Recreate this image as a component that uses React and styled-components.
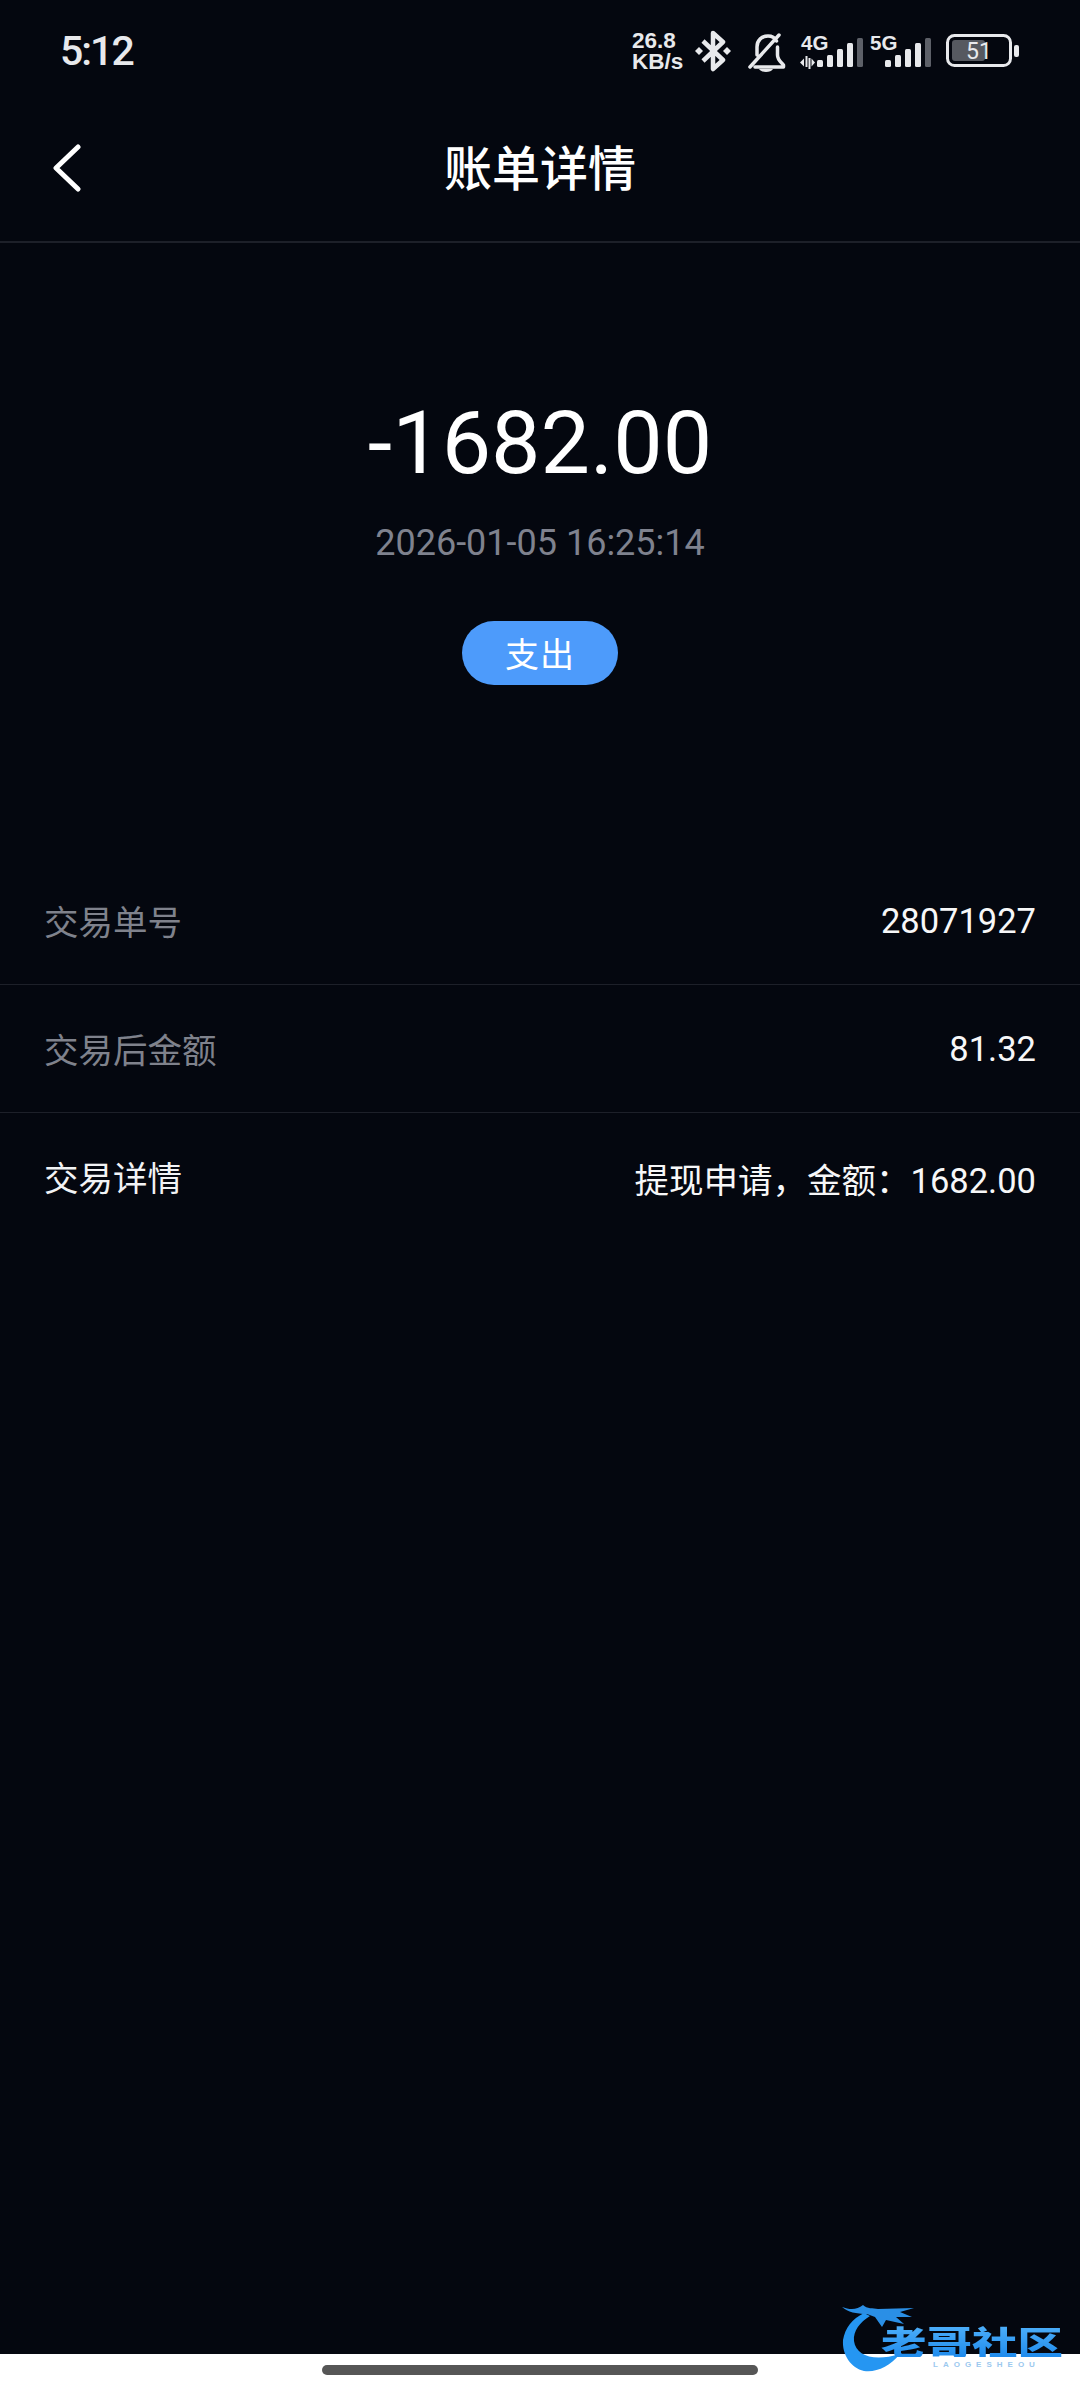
import React from "react";
import styled, { createGlobalStyle } from "styled-components";

const GlobalStyle = createGlobalStyle`
  html, body {
    margin: 0;
    padding: 0;
    background: #04070f;
  }
  * {
    box-sizing: border-box;
  }
`;

const FONT = `Roboto, "Noto Sans CJK SC", sans-serif`;

const Page = styled.div`
  position: relative;
  width: 1080px;
  height: 2400px;
  display: flex;
  flex-direction: column;
  overflow: hidden;
  background: #04070f;
  color: #fff;
  font-family: ${FONT};
`;

const StatusBar = styled.div`
  height: 90px;
  flex-shrink: 0;
  display: flex;
  align-items: center;
  justify-content: space-between;
  padding: 12px 60px 0 60px;
`;

const Time = styled.span`
  font-size: 41px;
  font-weight: 500;
  letter-spacing: -2px;
  color: #e8e9ec;
`;

const StatusIcons = styled.div`
  display: flex;
  align-items: center;
`;

const Speed = styled.div`
  width: 58px;
  margin-right: 5px;
  font-family: "Liberation Sans", sans-serif;
  font-size: 22.5px;
  font-weight: 700;
  line-height: 21px;
  color: #e8e9ec;
  white-space: nowrap;
`;

const NavBar = styled.div`
  position: relative;
  height: 153px;
  flex-shrink: 0;
  display: flex;
  align-items: center;
  justify-content: center;
  border-bottom: 2px solid #1d2029;
`;

const BackIcon = styled.svg`
  position: absolute;
  left: 50px;
  top: 54px;
`;

const Title = styled.h1`
  margin: 0 0 2px;
  font-size: 48px;
  font-weight: 500;
  letter-spacing: 0;
`;

const Hero = styled.div`
  display: flex;
  flex-direction: column;
  align-items: center;
  padding-top: 147px;
`;

const Amount = styled.div`
  font-size: 88px;
  line-height: 106px;
  font-weight: 400;
`;

const DateText = styled.div`
  margin-top: 25px;
  font-size: 36px;
  line-height: 44px;
  color: #7f828e;
`;

const Tag = styled.div`
  margin-top: 56px;
  width: 156px;
  height: 64px;
  display: flex;
  align-items: center;
  justify-content: center;
  padding-bottom: 2px;
  border-radius: 32px;
  background: #4d9bfb;
  font-size: 34px;
  letter-spacing: 1px;
`;

const Rows = styled.div`
  margin-top: 172px;
`;

const Row = styled.div`
  height: 128px;
  display: flex;
  align-items: center;
  justify-content: space-between;
  padding: 0 44px;
  font-size: 34.5px;
  border-bottom: ${(p) => (p.$last ? "none" : "1px solid #1d2029")};
`;

const Label = styled.span`
  margin-bottom: 2px;
  color: ${(p) => (p.$bright ? "#f2f3f5" : "#7f828c")};
`;

const Value = styled.span`
  margin-top: 1px;
  color: #f7f7f8;
`;

const Spacer = styled.div`
  flex: 1;
`;

const HomeBar = styled.div`
  height: 46px;
  flex-shrink: 0;
  display: flex;
  justify-content: center;
  padding-top: 11px;
  background: #fff;
`;

const HomeHandle = styled.div`
  width: 436px;
  height: 10px;
  border-radius: 5px;
  background: #565656;
`;

const Watermark = styled.div`
  position: absolute;
  left: 840px;
  top: 2300px;
  width: 230px;
  height: 76px;
`;

const DragonMark = styled.svg`
  position: absolute;
  left: 0;
  top: 0;
`;

const WatermarkName = styled.div`
  position: absolute;
  left: 41px;
  top: 24px;
  font-family: "Noto Sans CJK SC", sans-serif;
  font-size: 45.5px;
  line-height: 46px;
  font-weight: 900;
  white-space: nowrap;
  transform: scaleY(0.72);
  transform-origin: top left;
  background: linear-gradient(180deg, #4fb0fa 0%, #1f8bec 100%);
  -webkit-background-clip: text;
  background-clip: text;
  color: transparent;
`;

const WatermarkSub = styled.div`
  position: absolute;
  left: 93px;
  top: 60px;
  font-family: "Liberation Sans", sans-serif;
  font-size: 8px;
  line-height: 9px;
  font-weight: 700;
  letter-spacing: 5px;
  color: #9cc9ef;
  white-space: nowrap;
`;

const Bluetooth = () => (
  <svg width="38" height="42" viewBox="0 0 38 42" style={{ marginRight: 15 }}>
    <path d="M8 11 L28 30 L18 39 V3 L28 12 L8 31" fill="none" stroke="#e8e9ec" strokeWidth="4.5" strokeLinejoin="round" />
    <path d="M4 17 L8 21 L4 25 L0 21Z M32 17 L36 21 L32 25 L28 21Z" fill="#e8e9ec" />
  </svg>
);

const BellOff = () => (
  <svg width="38" height="44" viewBox="0 0 38 44" style={{ marginRight: 14 }}>
    <path
      d="M9 26 V18 C9 11 14 7 20 7 C24 7 27 9 28.500 12 M29.500 18 V26 C29.500 31 33 33 35.500 36 V38 H7 M2 38 L31 6"
      fill="none"
      stroke="#e8e9ec"
      strokeWidth="3.500"
      strokeLinecap="round"
      strokeLinejoin="round"
    />
    <path d="M11 40 H25 C23 44 13 44 11 40Z" fill="#e8e9ec" />
  </svg>
);

const BAR_HEIGHTS = [7, 12, 18, 24, 29];

const Signal = ({ label, arrows, width }) => (
  <svg width={width} height="44" viewBox={`0 0 ${width} 44`}>
    <text x={arrows ? 1 : 0} y="21" fontFamily="Liberation Sans, sans-serif" fontWeight="700" fontSize="20.500" fill="#e8e9ec">
      {label}
    </text>
    {arrows && <path d="M0 33.500 L4 29.500 V37.500Z M5.500 27 H7.500 V38 H5.500Z M8.500 29 H10.500 V40 H8.500Z M11.500 29.500 L15 33.500 L11.500 37.500Z" fill="#e8e9ec" />}
    {BAR_HEIGHTS.map((h, i) => (
      <rect key={i} x={width - 47 + i * 10} y={38 - h} width="6" height={h} rx="1.500" fill={i === 4 ? "#5d6068" : "#e8e9ec"} />
    ))}
  </svg>
);

const Battery = () => (
  <svg width="74" height="34" viewBox="0 0 74 34" style={{ marginLeft: 14 }}>
    <rect x="1.500" y="1.500" width="63" height="30" rx="7" fill="none" stroke="#e8e9ec" strokeWidth="3" />
    <rect x="6" y="6" width="33" height="21" rx="3" fill="#565960" />
    <rect x="68" y="11" width="5" height="12" rx="2" fill="#e8e9ec" />
    <text x="33" y="25" textAnchor="middle" fontFamily="Roboto, sans-serif" fontWeight="400" fontSize="23" fill="#e8e9ec">
      51
    </text>
  </svg>
);

const Dragon = () => (
  <DragonMark width="90" height="76" viewBox="0 0 90 76">
    <path
      d="M3 40 C5 28 12 19 24 13 L30 16 C20 22 13 31 14 41 C16 56 34 62 60 54 C50 66 36 73 24 71 C11 68 2 55 3 40Z"
      fill="#2596f2"
    />
    <path
      d="M2 7 C10 10 17 10 23 5 C27 9 33 8 38 9 L74 8 L60 12 L72 17 L56 17 L64 24 L46 20 L42 27 L35 17 L27 14 C16 14 8 12 2 7Z"
      fill="#2a8fe6"
    />
  </DragonMark>
);

const rows = [
  { label: "交易单号", value: "28071927" },
  { label: "交易后金额", value: "81.32" },
  { label: "交易详情", value: "提现申请，金额：1682.00", bright: true, last: true },
];

const App = () => {
  return (
    <Page>
      <GlobalStyle />
      <StatusBar>
        <Time>5:12</Time>
        <StatusIcons>
          <Speed>
            26.8
            <br />
            KB/s
          </Speed>
          <Bluetooth />
          <BellOff />
          <Signal label="4G" arrows width={64} />
          <span style={{ width: 6 }} />
          <Signal label="5G" width={62} />
          <Battery />
        </StatusIcons>
      </StatusBar>

      <NavBar>
        <BackIcon width="32" height="48" viewBox="0 0 32 48">
          <path d="M28 3 L6 24 L28 45" fill="none" stroke="#fff" strokeWidth="5" strokeLinecap="round" strokeLinejoin="round" />
        </BackIcon>
        <Title>账单详情</Title>
      </NavBar>

      <Hero>
        <Amount>-1682.00</Amount>
        <DateText>2026-01-05 16:25:14</DateText>
        <Tag>支出</Tag>
      </Hero>

      <Rows>
        {rows.map((row) => (
          <Row key={row.label} $last={row.last}>
            <Label $bright={row.bright}>{row.label}</Label>
            <Value>{row.value}</Value>
          </Row>
        ))}
      </Rows>

      <Spacer />

      <HomeBar>
        <HomeHandle />
      </HomeBar>

      <Watermark>
        <Dragon />
        <WatermarkName>老哥社区</WatermarkName>
        <WatermarkSub>LAOGESHEOU</WatermarkSub>
      </Watermark>
    </Page>
  );
};

export default App;
